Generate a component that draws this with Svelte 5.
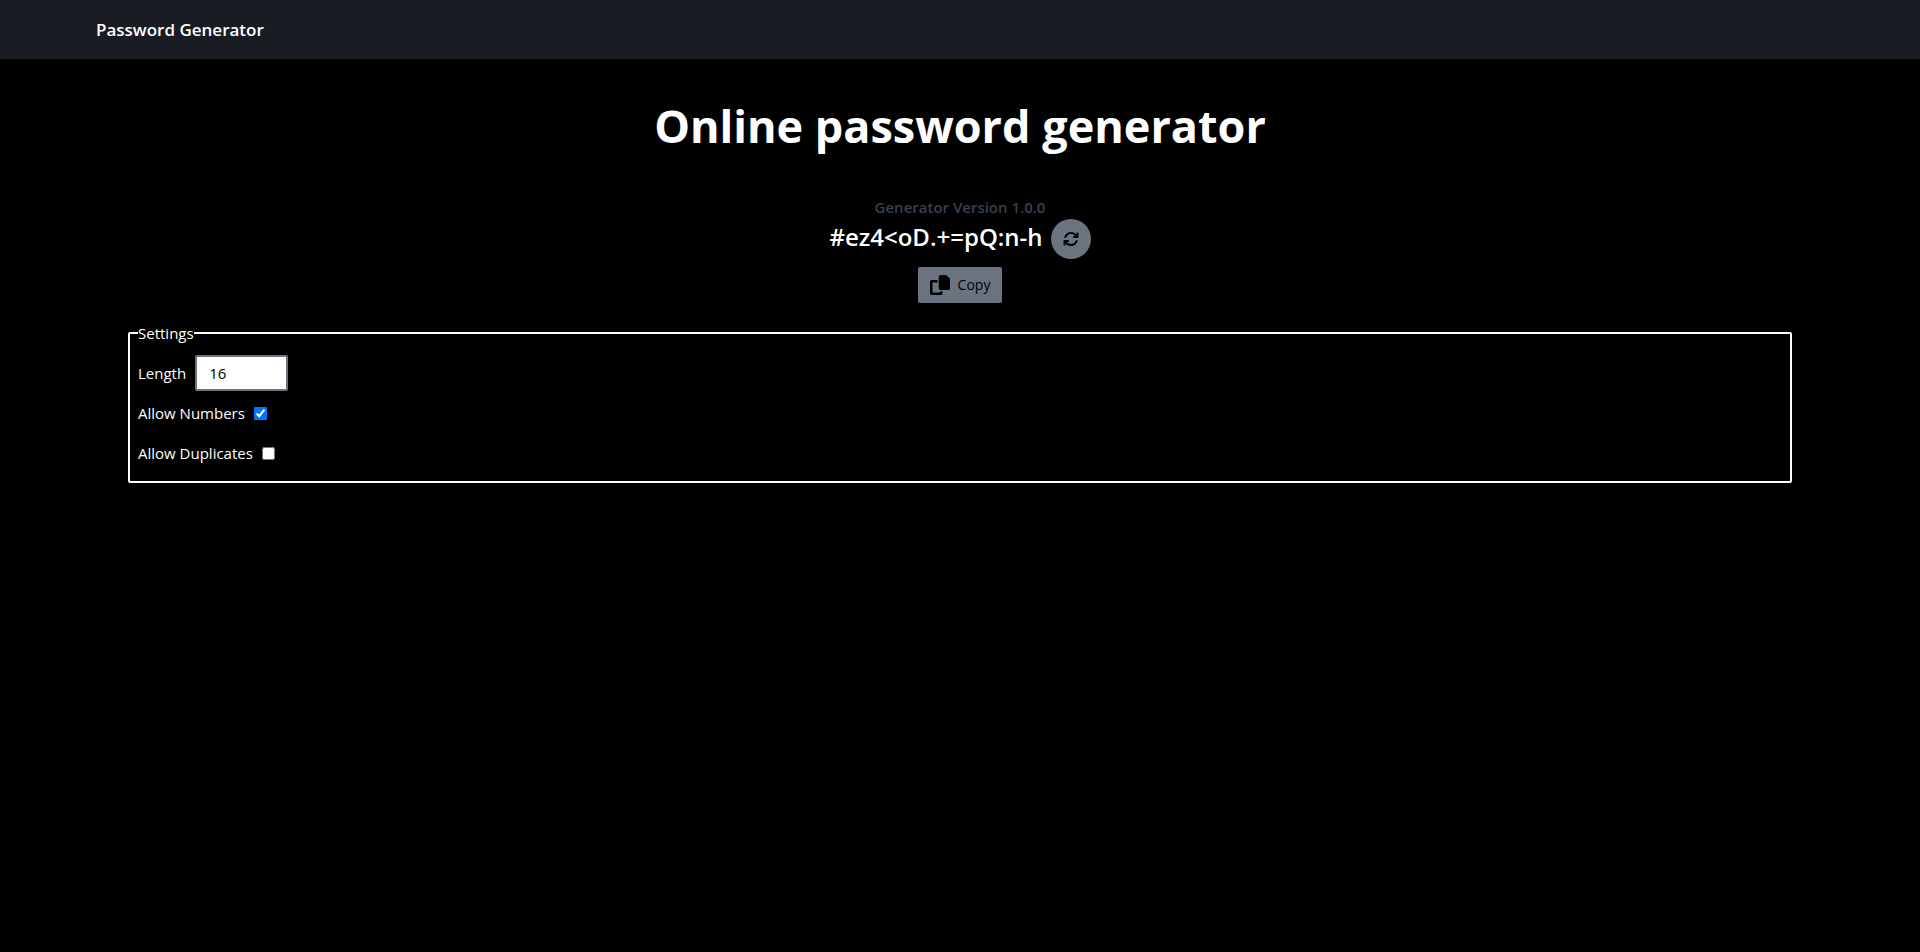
<script>
  let length = $state(16);
  let numbers = $state(true);
  let duplicates = $state(false);
  let password = $state('#ez4<oD.+=pQ:n-h');

  function generate() {
    let pool = 'abcdefghijklmnopqrstuvwxyzABCDEFGHIJKLMNOPQRSTUVWXYZ#<.+=:-!?';
    if (numbers) pool += '0123456789';
    let chars = [...pool];
    let result = '';
    while (result.length < length && chars.length) {
      const i = Math.floor(Math.random() * chars.length);
      result += chars[i];
      if (!duplicates) chars.splice(i, 1);
    }
    password = result;
  }

  function copy() {
    navigator.clipboard?.writeText(password);
  }
</script>

<header>
  <a class="brand" href="/">Password Generator</a>
</header>
<main>
  <h1>Online password generator</h1>
  <section class="output">
    <p class="version">Generator Version 1.0.0</p>
    <div class="result">
      <h2>{password}</h2>
      <button class="refresh" type="button" aria-label="Generate" onclick={generate}>
        <svg viewBox="0 0 512 512" width="16" height="16" fill="currentColor" aria-hidden="true">
          <path d="M105.1 202.6c7.7-21.8 20.2-42.3 37.8-59.8c62.5-62.5 163.8-62.5 226.3 0L386.3 160H352c-17.7 0-32 14.3-32 32s14.3 32 32 32H463.9c17.7 0 32-14.3 32-32V80c0-17.7-14.3-32-32-32s-32 14.3-32 32v35.2L414.4 97.6c-87.5-87.5-229.3-87.5-316.8 0C73.2 122 55.6 150.7 44.8 181.4c-5.9 16.7 2.9 34.9 19.5 40.8s34.9-2.9 40.8-19.5zM39 289.3c-5 1.5-9.8 4.2-13.7 8.2c-4 4-6.7 8.8-8.1 14c-.3 1.2-.6 2.5-.8 3.8c-.3 1.7-.4 3.4-.4 5.1V432c0 17.7 14.3 32 32 32s32-14.3 32-32V396.9l17.6 17.5c87.5 87.4 229.3 87.4 316.7 0c24.4-24.4 42.1-53.1 52.9-83.7c5.9-16.7-2.9-34.9-19.5-40.8s-34.9 2.9-40.8 19.5c-7.7 21.8-20.2 42.3-37.8 59.8c-62.5 62.5-163.8 62.5-226.3 0l-.1-.1L125.6 352H160c17.7 0 32-14.3 32-32s-14.3-32-32-32H48.4c-1.6 0-3.2 .1-4.8 .3s-3.1 .5-4.6 1z" />
        </svg>
      </button>
    </div>
    <button class="copy" type="button" onclick={copy}>
      <svg viewBox="0 0 512 512" width="20" height="20" fill="currentColor" aria-hidden="true">
        <path d="M272 0H396.1c12.7 0 24.9 5.1 33.9 14.1l67.9 67.9c9 9 14.1 21.2 14.1 33.9V336c0 26.5-21.5 48-48 48H272c-26.5 0-48-21.5-48-48V48c0-26.5 21.5-48 48-48zM48 128H192v64H64V448H256V416h64v48c0 26.5-21.5 48-48 48H48c-26.5 0-48-21.5-48-48V176c0-26.5 21.5-48 48-48z" />
      </svg>
      Copy
    </button>
  </section>
  <fieldset>
    <legend>Settings</legend>
    <div class="row">
      <label for="length">Length</label>
      <input id="length" class="number" type="number" min="4" max="60" bind:value={length} />
    </div>
    <div class="row">
      <label for="numbers">Allow Numbers</label>
      <input id="numbers" type="checkbox" bind:checked={numbers} />
    </div>
    <div class="row">
      <label for="duplicates">Allow Duplicates</label>
      <input id="duplicates" type="checkbox" bind:checked={duplicates} />
    </div>
  </fieldset>
</main>

<style>
  :global(body) {
    margin: 0;
    background: #000;
    color: #fff;
    font: 15px/24px "Segoe UI", "Open Sans", "Noto Sans", sans-serif;
  }
  header {
    padding: 16px 96px;
    background: #1a1c23;
  }
  .brand {
    display: block;
    color: #fff;
    font-size: 17px;
    line-height: 27px;
    font-weight: 600;
    text-decoration: none;
  }
  main {
    padding: 32px 128px;
  }
  h1, h2, p {
    margin: 0;
  }
  h1 {
    font-size: 45px;
    line-height: 70px;
    font-weight: 700;
    text-align: center;
  }
  .output {
    display: flex;
    flex-direction: column;
    align-items: center;
    padding: 34px 0 18px;
  }
  .version {
    color: #374151;
    font-weight: 600;
  }
  .result {
    display: flex;
    gap: 8px;
    margin-bottom: 8px;
  }
  h2 {
    font-size: 24px;
    line-height: 36px;
    font-weight: 600;
  }
  button {
    display: flex;
    align-items: center;
    border: 0;
    background: #6b7280;
    color: #000;
    font-family: inherit;
    cursor: pointer;
  }
  .refresh {
    justify-content: center;
    width: 40px;
    height: 40px;
    padding: 0;
    border-radius: 50%;
  }
  .copy {
    gap: 8px;
    padding: 8px 12px;
    border-radius: 2px;
    font-size: 14px;
    line-height: 20px;
  }
  fieldset {
    margin: 0;
    padding: 8px;
    border: 2px solid #fff;
    border-radius: 2px;
  }
  legend {
    padding: 0;
  }
  .row {
    display: flex;
    align-items: center;
    gap: 9px;
    height: 40px;
  }
  input {
    margin: 0;
  }
  .number {
    box-sizing: border-box;
    width: 93px;
    height: 36px;
    padding: 4px 12px;
    border: 2px solid #6b7280;
    border-radius: 2px;
    background: #fff;
    color: #000;
    font: inherit;
  }
</style>
